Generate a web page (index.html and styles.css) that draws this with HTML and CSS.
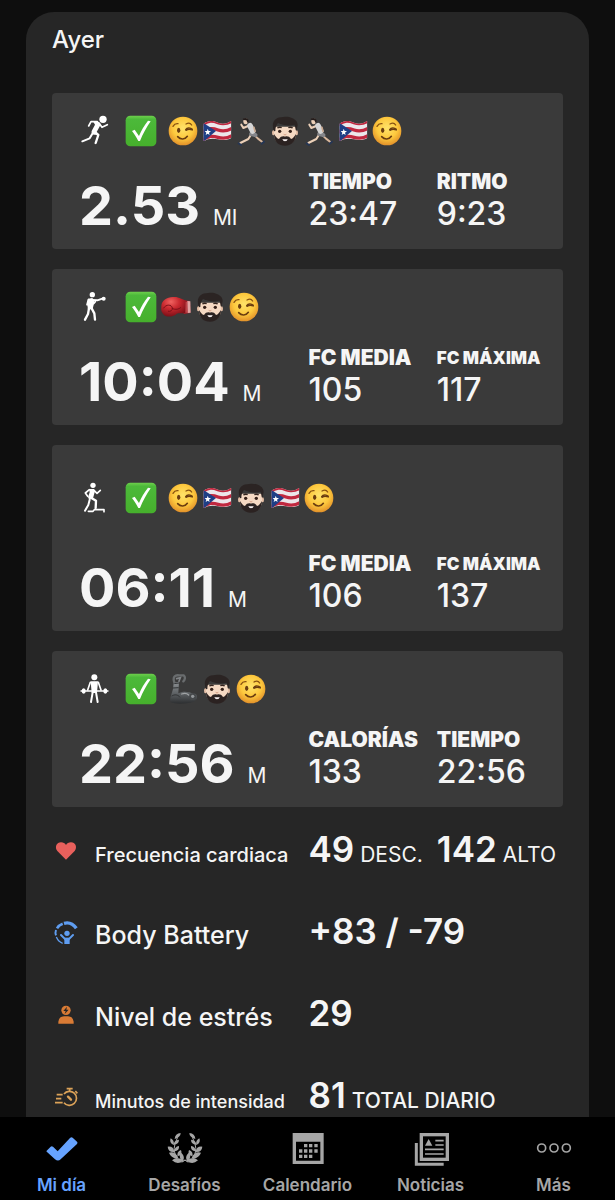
FILE: index.html
```html
<!DOCTYPE html>
<html lang="es">
<head>
<meta charset="utf-8">
<meta name="viewport" content="width=device-width, initial-scale=1">
<title>Mi día</title>
<link rel="stylesheet" href="styles.css">
</head>
<body>
<svg class="sprite" aria-hidden="true">
  <defs>
    <linearGradient id="g-green" x1="0" y1="0" x2="0" y2="1"><stop offset="0" stop-color="#6fd04d"/><stop offset=".12" stop-color="#4cb93a"/><stop offset="1" stop-color="#46b02c"/></linearGradient>
    <radialGradient id="g-face" cx=".5" cy=".4" r=".6"><stop offset="0" stop-color="#ffe36a"/><stop offset=".6" stop-color="#fdc83d"/><stop offset="1" stop-color="#e2912a"/></radialGradient>
    <radialGradient id="g-glove" cx=".4" cy=".25" r=".75"><stop offset="0" stop-color="#f0625f"/><stop offset=".45" stop-color="#cb2a30"/><stop offset="1" stop-color="#7d1018"/></radialGradient>
    <linearGradient id="g-metal" x1="0" y1="0" x2="0" y2="1"><stop offset="0" stop-color="#8d9194"/><stop offset=".5" stop-color="#606467"/><stop offset="1" stop-color="#2c2e30"/></linearGradient>
    <clipPath id="c-flag"><path d="M4 24C20 12 32 14 48 20S76 22 88 14V66C76 74 62 73 48 70S20 66 4 76Z"/></clipPath>
  </defs>
  <symbol id="e-check" viewBox="0 0 96 96">
    <rect x="2" y="2" width="92" height="92" rx="14" fill="url(#g-green)"/>
    <path d="M21 48L29 44L42 63C50 45 57 32 69 17L77 19C65 36 53 58 45 78H40C33 65 28 57 21 48Z" fill="#fff"/>
  </symbol>
  <symbol id="e-wink" viewBox="0 0 90 90">
    <circle cx="45" cy="45" r="43" fill="url(#g-face)"/>
    <ellipse cx="32" cy="43" rx="5" ry="8" fill="#6b3d10"/>
    <path d="M53 41C57 34 67 34 73 40M54 43C61 38 67 39 73 42" fill="none" stroke="#6b3d10" stroke-width="4" stroke-linecap="round"/>
    <path d="M29 62C38 72 51 71 58 61" fill="none" stroke="#6b3d10" stroke-width="5" stroke-linecap="round"/>
    <path d="M15 31C19 24 24 22 30 23M54 24C61 20 68 22 71 27" fill="none" stroke="#8a5312" stroke-width="4" stroke-linecap="round"/>
  </symbol>
  <symbol id="e-flag" viewBox="0 0 90 90">
    <g clip-path="url(#c-flag)">
      <rect width="90" height="90" fill="#ece6ea"/>
      <g fill="none" stroke="#c0283f" stroke-width="10">
        <path d="M0 27C20 12 32 14 48 20S76 23 90 15"/>
        <path d="M0 49C20 35 32 36 48 42S76 45 90 37"/>
        <path d="M0 73C20 59 32 59 48 64S76 67 90 59"/>
      </g>
      <path d="M3 20L42 45L3 78Z" fill="#1f3f86"/>
      <path d="M17 38L20 45L27 45L21 50L23 57L17 53L11 57L13 50L8 45L15 45Z" fill="#fff"/>
    </g>
  </symbol>
  <symbol id="e-runner" viewBox="0 0 90 90">
    <g fill="none" stroke-linecap="round" stroke-linejoin="round">
      <path d="M56 58L66 68L79 78" stroke="#d9b79c" stroke-width="6"/>
      <path d="M44 58L37 69L13 81" stroke="#ecd0b8" stroke-width="6"/>
      <path d="M77 83L84 77M8 82L15 87" stroke="#263654" stroke-width="6"/>
      <path d="M36 30L22 36L16 26" stroke="#ecd0b8" stroke-width="6"/>
      <path d="M46 54L58 57" stroke="#85868a" stroke-width="13"/>
      <path d="M42 29L50 45" stroke="#d5d5d5" stroke-width="17"/>
      <path d="M54 34L57 46" stroke="#c9a78e" stroke-width="5"/>
    </g>
    <ellipse cx="29" cy="16" rx="7" ry="9" fill="#ecd0b8"/>
    <path d="M20 9C26 3 38 6 38 15L35 21L31 13L22 12Z" fill="#241c1b"/>
  </symbol>
  <symbol id="e-beard" viewBox="0 0 90 90">
    <ellipse cx="11" cy="50" rx="5" ry="8" fill="#e5bfa6"/><ellipse cx="79" cy="50" rx="5" ry="8" fill="#e5bfa6"/>
    <path d="M12 32H78V56C77 76 62 86 45 86S13 76 12 56Z" fill="#f5d9c3"/>
    <path d="M12 46C2 20 14 3 40 3C53-1 83 6 83 27L79 46C76 40 76 34 74 26C58 30 40 29 24 21C18 27 16 36 16 45Z" fill="#2b2423"/>
    <path d="M12 54C17 62 21 68 27 69C32 61 39 60 45 62C51 60 58 61 63 69C69 68 73 62 78 54C78 78 63 89 45 89S12 79 12 54Z" fill="#2b2221"/>
    <path d="M37 69Q45 71 53 69Q52 76 45 76Q39 76 37 69Z" fill="#f4eeee"/>
    <circle cx="29" cy="46" r="5" fill="#352019"/><circle cx="61" cy="46" r="5" fill="#352019"/>
    <path d="M22 36Q29 32 35 35M55 35Q62 32 68 36" fill="none" stroke="#33241f" stroke-width="4"/>
    <path d="M41 55Q45 59 49 55" fill="none" stroke="#d39e84" stroke-width="3"/>
  </symbol>
  <symbol id="e-glove" viewBox="0 0 90 90">
    <path d="M68 25L87 27L88 63L68 66Z" fill="#a51f28"/>
    <path d="M79 27L88 28L89 62L80 63Z" fill="#e0a5a3"/>
    <path d="M75 30V62" stroke="#ef918c" stroke-width="2"/>
    <path d="M1 42C2 24 20 13 40 15C56 15 64 23 74 25L73 63C61 65 56 62 47 65C39 75 13 78 6 65C0 58 0 52 1 42Z" fill="url(#g-glove)"/>
    <path d="M8 48C15 36 32 37 34 48C35 55 28 60 22 58M34 50C45 54 53 52 59 47" fill="none" stroke="#7d1018" stroke-width="3" stroke-linecap="round"/>
  </symbol>
  <symbol id="e-arm" viewBox="0 0 90 90">
    <path d="M17 26L33 24L31 58C43 50 64 52 76 60C85 58 88 63 87 74L80 82C65 91 19 91 8 85C3 78 11 60 15 45Z" fill="url(#g-metal)"/>
    <path d="M17 29L33 27M15 42L32 41M11 66C19 61 30 61 36 70" fill="none" stroke="#303234" stroke-width="3"/>
    <path d="M19 25C13 9 22 2 33 4L47 4C53 9 51 17 46 22" fill="none" stroke="#696c6e" stroke-width="7" stroke-linecap="round"/>
    <path d="M26 14L37 11L33 22" fill="none" stroke="#808386" stroke-width="5" stroke-linecap="round"/>
    <circle cx="74" cy="68" r="10" fill="#46494b"/><circle cx="74" cy="67" r="5" fill="#94989b"/>
    <path d="M41 60C49 57 57 58 62 63" fill="none" stroke="#a0a3a5" stroke-width="4" stroke-linecap="round"/>
  </symbol>
</svg>

<div class="app">
  <main class="feed">
    <section class="day" aria-labelledby="day-title">
      <h1 class="day__title" id="day-title">Ayer</h1>

      <div class="activities">
        <article class="activity">
          <header class="activity__head">
            <svg class="sport" viewBox="0 0 90 90" aria-label="Carrera"><circle cx="72" cy="10" r="11"/><path d="M42 16L58 17Q66 20 64 28L53 48L60 56L44 56Q36 53 38 45L48 26Z"/><path class="l4" d="M29 30L36 17H55"/><path class="l4" d="M62 24L69 34L85 26"/><path class="l7" d="M47 48L58 57L50 81"/><path class="l5" d="M40 53L32 67L10 76"/></svg>
            <div class="emojis emojis--spaced" aria-hidden="true">
              <svg class="emoji emoji--check"><use href="#e-check"/></svg>
              <svg class="emoji"><use href="#e-wink"/></svg>
              <svg class="emoji"><use href="#e-flag"/></svg>
              <svg class="emoji"><use href="#e-runner"/></svg>
              <svg class="emoji"><use href="#e-beard"/></svg>
              <svg class="emoji"><use href="#e-runner"/></svg>
              <svg class="emoji"><use href="#e-flag"/></svg>
              <svg class="emoji"><use href="#e-wink"/></svg>
            </div>
          </header>
          <div class="activity__stats">
            <p class="main-stat">2.53 <span class="unit">MI</span></p>
            <dl class="stat"><dt>TIEMPO</dt><dd>23:47</dd></dl>
            <dl class="stat"><dt>RITMO</dt><dd>9:23</dd></dl>
          </div>
        </article>

        <article class="activity">
          <header class="activity__head">
            <svg class="sport" viewBox="0 0 90 90" aria-label="Boxeo"><circle cx="40" cy="8" r="8"/><path d="M27 20L40 18L47 26L41 51L27 53L25 39Z"/><path class="l5" d="M38 24L55 25L70 20"/><circle cx="74" cy="20" r="6"/><path class="l4" d="M28 23L24 38L45 34L49 29"/><path class="l7" d="M30 49L27 66L18 83M38 49L46 64L48 83"/></svg>
            <div class="emojis" aria-hidden="true">
              <svg class="emoji emoji--check"><use href="#e-check"/></svg>
              <svg class="emoji"><use href="#e-glove"/></svg>
              <svg class="emoji"><use href="#e-beard"/></svg>
              <svg class="emoji"><use href="#e-wink"/></svg>
            </div>
          </header>
          <div class="activity__stats">
            <p class="main-stat">10:04 <span class="unit">M</span></p>
            <dl class="stat"><dt>FC MEDIA</dt><dd>105</dd></dl>
            <dl class="stat stat--long"><dt>FC MÁXIMA</dt><dd>117</dd></dl>
          </div>
        </article>

        <article class="activity activity--tall">
          <header class="activity__head">
            <svg class="sport" viewBox="0 0 90 90" aria-label="Step"><circle cx="42" cy="7" r="8"/><path d="M30 18H45L48 24L42 46L30 49L27 43L32 28Z"/><path class="l4" d="M31 20L19 30L26 40M45 22L54 31L64 22"/><path class="l7" d="M36 44L51 53L50 75"/><path class="l5" d="M32 50L28 66L18 83"/><path class="l4" d="M28 85H42L46 80H75V86"/></svg>
            <div class="emojis emojis--spaced" aria-hidden="true">
              <svg class="emoji emoji--check"><use href="#e-check"/></svg>
              <svg class="emoji"><use href="#e-wink"/></svg>
              <svg class="emoji"><use href="#e-flag"/></svg>
              <svg class="emoji"><use href="#e-beard"/></svg>
              <svg class="emoji"><use href="#e-flag"/></svg>
              <svg class="emoji"><use href="#e-wink"/></svg>
            </div>
          </header>
          <div class="activity__stats">
            <p class="main-stat">06:11 <span class="unit">M</span></p>
            <dl class="stat"><dt>FC MEDIA</dt><dd>106</dd></dl>
            <dl class="stat stat--long"><dt>FC MÁXIMA</dt><dd>137</dd></dl>
          </div>
        </article>

        <article class="activity">
          <header class="activity__head">
            <svg class="sport" viewBox="0 0 90 90" aria-label="Fuerza"><circle cx="46" cy="10" r="9"/><path d="M35 22H57L54 57H38Z"/><path class="l4" d="M34 25L26 48M58 25L66 48"/><path class="l3" d="M6 51H87"/><ellipse cx="14" cy="51" rx="6" ry="8"/><ellipse cx="79" cy="51" rx="6" ry="8"/><path class="l5" d="M41 55L36 84M51 55L56 84"/></svg>
            <div class="emojis emojis--spaced" aria-hidden="true">
              <svg class="emoji emoji--check"><use href="#e-check"/></svg>
              <svg class="emoji"><use href="#e-arm"/></svg>
              <svg class="emoji"><use href="#e-beard"/></svg>
              <svg class="emoji"><use href="#e-wink"/></svg>
            </div>
          </header>
          <div class="activity__stats">
            <p class="main-stat">22:56 <span class="unit">M</span></p>
            <dl class="stat"><dt>CALORÍAS</dt><dd>133</dd></dl>
            <dl class="stat"><dt>TIEMPO</dt><dd>22:56</dd></dl>
          </div>
        </article>
      </div>

      <dl class="metrics">
        <div class="metric metric--heart">
          <svg class="metric__icon" viewBox="0 0 84 84" aria-hidden="true"><path d="M42 68L16 42C7 30 14 16 27 16C34 16 39 19 42 24C45 19 50 16 57 16C70 16 77 30 68 42Z" fill="currentColor"/></svg>
          <dt class="metric__label metric__label--medium">Frecuencia cardiaca</dt>
          <dd class="metric__value metric__value--pair"><span class="amount">49 <small>DESC.</small></span><span class="amount">142 <small>ALTO</small></span></dd>
        </div>
        <div class="metric metric--battery">
          <svg class="metric__icon" viewBox="0 0 84 84" aria-hidden="true"><g fill="none" stroke="currentColor"><path d="M36 13Q58 7 73 28" stroke-width="10"/><path d="M32 14Q21 18 15 28" stroke-width="8"/><path d="M12 33Q9 41 12 49" stroke-width="6"/><path d="M13 54Q19 68 32 73" stroke-width="4"/><path d="M27 48L40 61M63 48L50 61" stroke-width="6" stroke-linecap="round"/></g><circle cx="45" cy="43" r="8" fill="currentColor"/><path d="M37 56H53V75H37Z" fill="currentColor"/></svg>
          <dt class="metric__label">Body Battery</dt>
          <dd class="metric__value">+83 / -79</dd>
        </div>
        <div class="metric metric--stress">
          <svg class="metric__icon" viewBox="0 0 84 84" aria-hidden="true"><circle cx="42" cy="28" r="14" fill="currentColor"/><path d="M45 17L34 30H41L38 39L50 26H43Z" fill="#262626"/><path d="M19 68V62Q22 46 36 46H48Q62 46 65 62V68Z" fill="currentColor"/></svg>
          <dt class="metric__label">Nivel de estrés</dt>
          <dd class="metric__value">29</dd>
        </div>
        <div class="metric metric--minutes">
          <svg class="metric__icon" viewBox="0 0 84 84" aria-hidden="true"><g fill="none" stroke="currentColor" stroke-width="5"><path d="M36 33A21 21 0 1 1 36 59"/><path d="M44 17H62M53 18V25M70 24L76 31M14 35H32M12 47H28M9 59H32"/><path d="M48 41L57 50" stroke-width="7" stroke-linecap="round"/></g></svg>
          <dt class="metric__label metric__label--small">Minutos de intensidad</dt>
          <dd class="metric__value"><span class="amount">81 <small class="strong">TOTAL DIARIO</small></span></dd>
        </div>
      </dl>
    </section>
  </main>

  <nav class="tabs" aria-label="Principal">
    <a class="tab tab--active" href="#mi-dia" aria-current="page">
      <svg class="tab__icon" viewBox="0 0 108 108" aria-hidden="true"><path d="M8 62L20 50Q23 47 27 50L41 64L78 24Q82 20 86 23L99 35Q102 38 99 42L50 88Q42 95 33 88L9 66Q6 64 8 62Z" fill="currentColor"/></svg>
      Mi día
    </a>
    <a class="tab" href="#desafios">
      <svg class="tab__icon" viewBox="0 0 108 108" aria-hidden="true">
        <g id="laurel" fill="currentColor"><path d="M64 97L54 90L46 95M30 82Q12 58 32 22" fill="none" stroke="currentColor" stroke-width="3"/><path d="M23 27Q24 10 41 9Q41 21 23 27ZM20 45Q5 38 11 25Q23 31 20 45ZM20 44Q21 31 36 29Q36 43 20 44ZM22 66Q4 68 2 50Q20 48 22 66ZM22 64Q22 50 36 48Q38 62 22 64ZM34 84Q13 87 6 68Q26 63 34 84ZM32 79Q28 65 42 60Q48 74 32 79ZM49 92Q32 106 15 91Q32 77 49 92ZM43 91Q33 74 43 68Q55 80 48 92Z"/></g>
        <use href="#laurel" transform="translate(108 0) scale(-1 1)"/>
      </svg>
      Desafíos
    </a>
    <a class="tab" href="#calendario">
      <svg class="tab__icon" viewBox="0 0 108 108" aria-hidden="true"><path d="M8 9H101V102H8ZM18 35V92H91V35Z" fill="currentColor" fill-rule="evenodd"/><path d="M42 42h10v10h-10zM57 42h10v10h-10zM73 42h10v10h-10zM27 58h10v10h-10zM42 58h10v10h-10zM57 58h10v10h-10zM73 58h10v10h-10zM27 74h10v10h-10zM42 74h10v10h-10zM57 74h10v10h-10z" fill="currentColor"/></svg>
      Calendario
    </a>
    <a class="tab" href="#noticias">
      <svg class="tab__icon" viewBox="0 0 108 108" aria-hidden="true"><g fill="none" stroke="currentColor"><rect x="25" y="14" width="78" height="74" stroke-width="10"/><path d="M10 39V103H92" stroke-width="9"/><path d="M67 32H92M67 45H92M36 58H92M36 72H92" stroke-width="5"/></g><path d="M36 47L47 27L58 47Z" fill="currentColor"/></svg>
      Noticias
    </a>
    <a class="tab" href="#mas">
      <svg class="tab__icon" viewBox="0 0 108 108" aria-hidden="true"><g fill="none" stroke="currentColor" stroke-width="5"><circle cx="17" cy="54" r="12"/><circle cx="54" cy="54" r="12"/><circle cx="91" cy="54" r="12"/></g></svg>
      Más
    </a>
  </nav>
</div>
</body>
</html>
```
FILE: styles.css
```css
* {
  box-sizing: border-box;
}

body,
h1,
p,
dl,
dd {
  margin: 0;
}

body {
  background: #0e0e0e;
  color: #f5f5f5;
  font-family: Inter, "Liberation Sans", sans-serif;
}

.sprite {
  position: absolute;
  width: 0;
  height: 0;
}

.app {
  display: flex;
  flex-direction: column;
  height: 100vh;
}

.feed {
  flex: 1;
  min-height: 0;
  overflow-y: auto;
  padding: 12px 26px;
  scrollbar-width: none;
}

.day {
  padding: 13px 26px 26px;
  border-radius: 28px;
  background: #262626;
}

.day__title {
  margin-bottom: 38px;
  font-size: 24px;
  font-weight: 500;
  line-height: 30px;
}

.activities {
  display: grid;
  gap: 20px;
}

.activity {
  padding: 22px 0 13px 27px;
  border-radius: 4px;
  background: #3a3a3a;
}

.activity__head {
  display: flex;
  align-items: center;
  gap: 16px;
  margin-bottom: 21px;
}

.activity--tall .activity__head {
  padding: 15px 0;
}

.sport {
  width: 30px;
  height: 30px;
  fill: #fff;
  overflow: visible;
}

.sport .l3,
.sport .l4,
.sport .l5,
.sport .l7 {
  fill: none;
  stroke: #fff;
  stroke-linecap: round;
  stroke-linejoin: round;
}

.sport .l3 { stroke-width: 4; }
.sport .l4 { stroke-width: 5; }
.sport .l5 { stroke-width: 6; }
.sport .l7 { stroke-width: 7; }

.emojis {
  display: flex;
  align-items: center;
  gap: 4px;
}

.emoji {
  width: 30px;
  height: 30px;
}

.emoji--check {
  width: 32px;
  height: 32px;
}

.emojis--spaced .emoji--check {
  margin-right: 7px;
}

.activity__stats {
  display: grid;
  grid-template-columns: minmax(0, 229fr) minmax(0, 128fr) minmax(0, 126fr);
  align-items: end;
  white-space: nowrap;
}

.main-stat {
  font-size: 54px;
  font-weight: 700;
  font-feature-settings: "case";
  line-height: 60px;
}

.unit {
  font-size: 21px;
  font-weight: 400;
  line-height: 1;
}

.stat {
  padding-bottom: 4px;
}

.stat dt {
  font-size: 21px;
  font-weight: 900;
  line-height: 28px;
}

.stat--long dt {
  font-size: 17px;
}

.stat dd {
  font-size: 32px;
  font-weight: 500;
  font-feature-settings: "case";
  line-height: 36px;
}

.metrics {
  padding-top: 3px;
}

.metric {
  display: grid;
  grid-template-columns: minmax(0, 43fr) minmax(0, 213fr) minmax(0, 254fr);
  align-items: baseline;
  padding: 17px 0 21px;
  white-space: nowrap;
}

.metric__icon {
  align-self: end;
  width: 28px;
  height: 28px;
  margin-bottom: 6px;
}

.metric--heart { color: #e8605c; }
.metric--battery { color: #5f9df0; }
.metric--stress { color: #d97b35; }
.metric--minutes { color: #dba258; }

.metric__label {
  color: #f5f5f5;
  font-size: 25px;
  font-weight: 500;
  line-height: 30px;
}

.metric__label--medium {
  font-size: 20px;
}

.metric__label--small {
  font-size: 18px;
}

.metric__value {
  color: #f5f5f5;
  font-size: 35px;
  font-weight: 600;
  line-height: 44px;
}

.metric__value--pair {
  display: flex;
  gap: 14px;
}

.amount {
  display: flex;
  align-items: baseline;
  gap: 6px;
}

.amount small {
  font-size: 21px;
  font-weight: 400;
  line-height: 1;
}

.amount .strong {
  font-weight: 500;
}

.tabs {
  display: grid;
  grid-template-columns: repeat(5, 1fr);
  padding: 13px 0 5px;
  background: #000;
}

.tab {
  display: flex;
  flex-direction: column;
  align-items: center;
  gap: 9px;
  color: #a6a6a6;
  font-size: 17px;
  font-weight: 600;
  line-height: 20px;
  text-decoration: none;
}

.tab--active {
  color: #66a3ff;
}

.tab__icon {
  width: 36px;
  height: 36px;
}
```
